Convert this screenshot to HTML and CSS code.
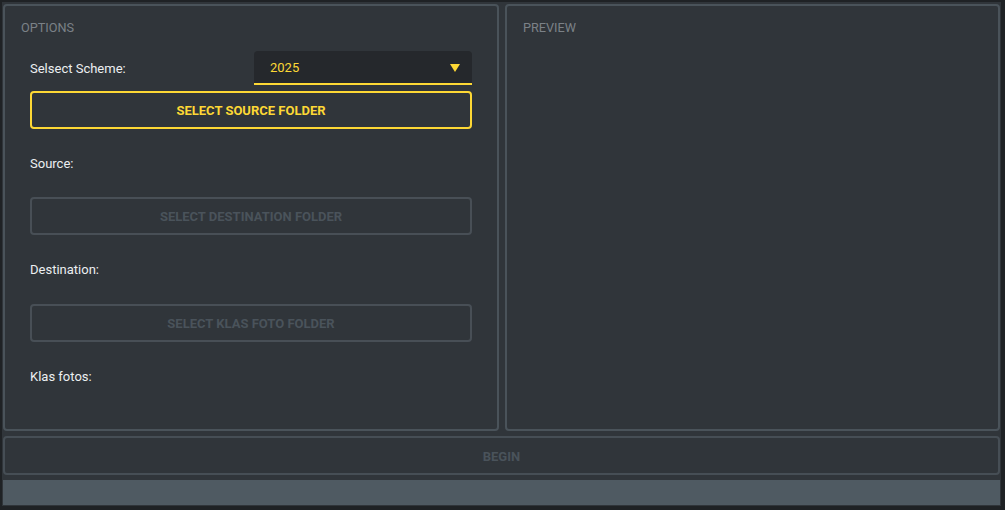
FILE: index.html
```html
<!DOCTYPE html>
<html>
<head>
<meta charset="utf-8">
<link rel="stylesheet" href="styles.css">
</head>
<body>
<div class="app">
  <div class="main">
    <section class="panel options">
      <div class="panel-title">OPTIONS</div>
      <div class="content">
        <div class="scheme-row">
          <span class="label">Selsect Scheme:</span>
          <div class="select">
            <span class="select-value">2025</span>
            <svg class="caret" width="10" height="8" viewBox="0 0 10 8"><path d="M0 0 H10 L5 8 Z" fill="#fdd835"/></svg>
          </div>
        </div>
        <button class="btn btn-active">SELECT SOURCE FOLDER</button>
        <div class="info">Source:</div>
        <button class="btn btn-disabled">SELECT DESTINATION FOLDER</button>
        <div class="info info-tall">Destination:</div>
        <button class="btn btn-disabled">SELECT KLAS FOTO FOLDER</button>
        <div class="info">Klas fotos:</div>
      </div>
    </section>
    <section class="panel preview">
      <div class="panel-title">PREVIEW</div>
    </section>
  </div>
  <button class="begin">BEGIN</button>
  <div class="progress"></div>
</div>
</body>
</html>
```

FILE: styles.css
```css
* { box-sizing: border-box; }
html, body { margin: 0; padding: 0; }
body {
  background: #1f2225;
  font-family: Roboto, "Liberation Sans", sans-serif;
  width: 1005px;
  height: 510px;
  overflow: hidden;
}
.app {
  margin: 2px 4px 4px 2px;
  height: 504px;
  background: #30353a;
  padding: 2px 1px 1px 1px;
  display: flex;
  flex-direction: column;
}
.main {
  display: grid;
  grid-template-columns: 496px 495px;
  column-gap: 6px;
  height: 427px;
}
.panel {
  border: 2px solid #4a535a;
  border-radius: 4px;
  background: #30353a;
  padding: 14px 0 0 14px;
}
.panel-title {
  font-size: 12.7px;
  line-height: 15px;
  color: #7b8187;
  padding-left: 2px;
}
.content {
  margin: 16px 25px 0 11px;
  display: flex;
  flex-direction: column;
}
.scheme-row {
  display: flex;
  justify-content: space-between;
  align-items: center;
  height: 34px;
  margin-bottom: 6px;
}
.label, .info {
  font-size: 13px;
  color: #eceff1;
}
.select {
  width: 218px;
  height: 34px;
  background: #25282c;
  border-bottom: 2px solid #fdd835;
  border-radius: 4px 4px 0 0;
  display: flex;
  align-items: center;
  justify-content: space-between;
  padding: 0 12px 0 16px;
}
.select-value {
  color: #fdd835;
  font-size: 13px;
}
.caret { margin-top: 1px; }
.btn {
  height: 38px;
  width: 100%;
  border-radius: 4px;
  background: transparent;
  font-family: Roboto, "Liberation Sans", sans-serif;
  font-weight: bold;
  font-size: 13px;
  padding: 1px 0 0 0;
}
.btn-active {
  border: 2px solid #fdd835;
  color: #fdd835;
}
.btn-disabled {
  border: 2px solid #484f56;
  color: #4a535b;
}
.info {
  height: 68px;
  display: flex;
  align-items: center;
}
.info-tall { height: 69px; }
.begin {
  margin-top: 5px;
  height: 39px;
  width: 100%;
  background: transparent;
  border: 2px solid #464e55;
  border-radius: 4px;
  color: #4a535b;
  font-family: Roboto, "Liberation Sans", sans-serif;
  font-weight: bold;
  font-size: 13px;
  padding: 1px 0 0 0;
}
.progress {
  margin-top: 5px;
  height: 25px;
  background: #4f5a62;
}
```
